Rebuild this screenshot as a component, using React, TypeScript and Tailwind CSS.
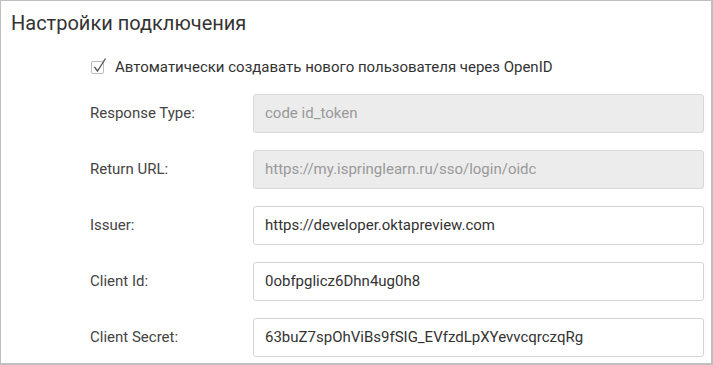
import React from "react";

const rows = [
  { label: "Response Type:", value: "code id_token", disabled: true },
  { label: "Return URL:", value: "https://my.ispringlearn.ru/sso/login/oidc", disabled: true },
  { label: "Issuer:", value: "https://developer.oktapreview.com", disabled: false },
  { label: "Client Id:", value: "0obfpglicz6Dhn4ug0h8", disabled: false },
  { label: "Client Secret:", value: "63buZ7spOhViBs9fSIG_EVfzdLpXYevvcqrczqRg", disabled: false },
];

export default function App() {
  return (
    <div
      className="w-[713px] h-[365px] bg-white border-l border-t border-r-2 border-b-2 border-[#bfbfbf] overflow-hidden"
      style={{ fontFamily: "Roboto, 'Noto Sans', sans-serif" }}
    >
      <h1 className="pl-[10px] pt-[9px] text-[20px] leading-[26px] text-[#333]">Настройки подключения</h1>

      <div className="ml-[90px] mt-[21px] flex items-center gap-[11px]">
        <div className="relative w-[13px] h-[13px] border border-[#bdbdbd] rounded-[2px] bg-white">
          <svg className="absolute -top-[5px] left-[1px]" width="14" height="16" viewBox="0 0 14 16">
            <path d="M1.5 10 L4.5 14 L12.5 1.5" fill="none" stroke="#555" strokeWidth="1.3" />
          </svg>
        </div>
        <span className="text-[15px] leading-[20px] text-[#333]">Автоматически создавать нового пользователя через OpenID</span>
      </div>

      <div className="mt-[17px] flex flex-col gap-[17px]">
        {rows.map((r) => (
          <div key={r.label} className="flex items-center">
            <div className="w-[252px] pl-[89px] text-[15px] text-[#444]">{r.label}</div>
            <div
              className={
                "w-[451px] h-[39px] flex items-center px-[11px] rounded-[3px] border text-[15px] " +
                (r.disabled
                  ? "bg-[#ececec] border-[#d8d8d8] text-[#999]"
                  : "bg-white border-[#d4d4d4] text-[#333]")
              }
            >
              {r.value}
            </div>
          </div>
        ))}
      </div>
    </div>
  );
}
